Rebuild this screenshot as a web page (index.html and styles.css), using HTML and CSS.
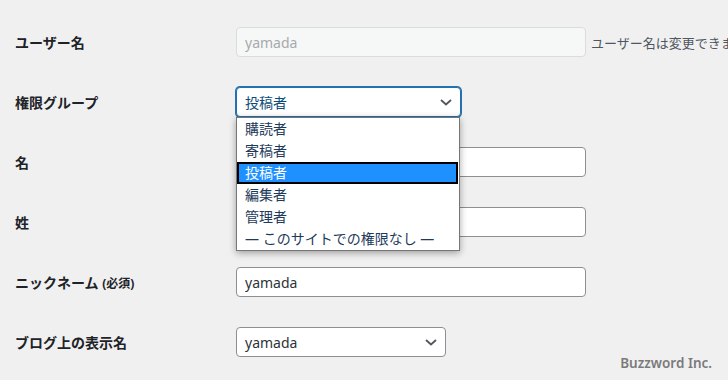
FILE: index.html
```html
<!DOCTYPE html>
<html lang="ja">
<head>
  <meta charset="UTF-8">
  <title>プロフィール</title>
  <meta name="viewport" content="width=device-width, initial-scale=1">
  <link rel="stylesheet" href="styles.css">
</head>
<body>

<div class="form-table">
  <div class="form-row">
    <label class="row-label">ユーザー名</label>
    <div class="row-field">
      <input type="text" class="regular-text" value="yamada" disabled>
      <span class="description">ユーザー名は変更できません。</span>
    </div>
  </div>

  <div class="form-row">
    <label class="row-label">権限グループ</label>
    <div class="row-field">
      <div class="select select-role">
        <span>投稿者</span>
        <svg class="chevron" width="12" height="7" viewBox="0 0 12 7"><path d="M1 1 L6 5.5 L11 1" fill="none" stroke="#50575e" stroke-width="1.8"/></svg>
        <ul class="select-list">
          <li>購読者</li>
          <li>寄稿者</li>
          <li class="selected">投稿者</li>
          <li>編集者</li>
          <li>管理者</li>
          <li>— このサイトでの権限なし —</li>
        </ul>
      </div>
    </div>
  </div>

  <div class="form-row">
    <label class="row-label">名</label>
    <div class="row-field">
      <input type="text" class="regular-text" value="">
    </div>
  </div>

  <div class="form-row">
    <label class="row-label">姓</label>
    <div class="row-field">
      <input type="text" class="regular-text" value="">
    </div>
  </div>

  <div class="form-row">
    <label class="row-label">ニックネーム <span class="required">(必須)</span></label>
    <div class="row-field">
      <input type="text" class="regular-text" value="yamada">
    </div>
  </div>

  <div class="form-row">
    <label class="row-label">ブログ上の表示名</label>
    <div class="row-field">
      <div class="select select-display">
        <span>yamada</span>
        <svg class="chevron" width="12" height="7" viewBox="0 0 12 7"><path d="M1 1 L6 5.5 L11 1" fill="none" stroke="#50575e" stroke-width="1.8"/></svg>
      </div>
    </div>
  </div>
</div>

<div class="watermark">Buzzword Inc.</div>

</body>
</html>
```

FILE: styles.css
```css
html, body {
  margin: 0;
  overflow: hidden;
}

body {
  font-family: "Noto Sans", "Noto Sans CJK JP", sans-serif;
  font-size: 14px;
  color: #1d2327;
  background-color: #f0f0f1;
  width: 728px;
  height: 380px;
  position: relative;
}

.form-table {
  padding: 12px 0 0 15px;
}

.form-row {
  display: grid;
  grid-template-columns: 221px 1fr;
  align-items: center;
  height: 60px;
}

.row-label {
  font-weight: 700;
  color: #1d2327;
}

.required {
  font-size: 12px;
}

.row-field {
  display: flex;
  align-items: center;
  white-space: nowrap;
  min-width: 0;
  overflow: visible;
}

input {
  box-sizing: border-box;
  font-family: inherit;
  font-size: 14px;
  height: 30px;
  padding: 0 8px;
  color: #2c3338;
  background: #fff;
  border: 1px solid #8c8f94;
  border-radius: 4px;
  flex-shrink: 0;
}

.regular-text {
  width: 350px;
}

input:disabled {
  background: #f6f7f7;
  border-color: #dcdcde;
  color: #a7aaad;
}

.description {
  margin-left: 5px;
  font-size: 13px;
  color: #50575e;
}

/* select */
.select {
  position: relative;
  box-sizing: border-box;
  height: 30px;
  display: flex;
  align-items: center;
  justify-content: space-between;
  padding: 0 8px 0 8px;
  background: #fff;
  border: 1px solid #8c8f94;
  border-radius: 4px;
  color: #2c3338;
}

.select-role {
  width: 225px;
  border-color: #2271b1;
  box-shadow: 0 0 0 1px #2271b1;
  color: #0a4b78;
}

.select-display {
  width: 210px;
}

.chevron {
  display: block;
}

.select-list {
  position: absolute;
  top: 29px;
  left: -1px;
  width: 224px;
  box-sizing: border-box;
  margin: 0;
  padding: 0;
  list-style: none;
  background: #fff;
  border: 1px solid #767676;
  box-shadow: 0 2px 7px rgba(0,0,0,0.35);
  z-index: 5;
}

.select-list li {
  height: 22px;
  line-height: 22px;
  padding-left: 8px;
  color: #1d3a5a;
}

.select-list li.selected {
  background: #1e90ff;
  color: #fff;
  box-shadow: inset 0 0 0 2px #000;
  margin-right: 1px;
}

.watermark {
  position: absolute;
  right: 16px;
  bottom: 8px;
  font-size: 13.5px;
  font-weight: 600;
  color: #7a7a7a;
}
```
